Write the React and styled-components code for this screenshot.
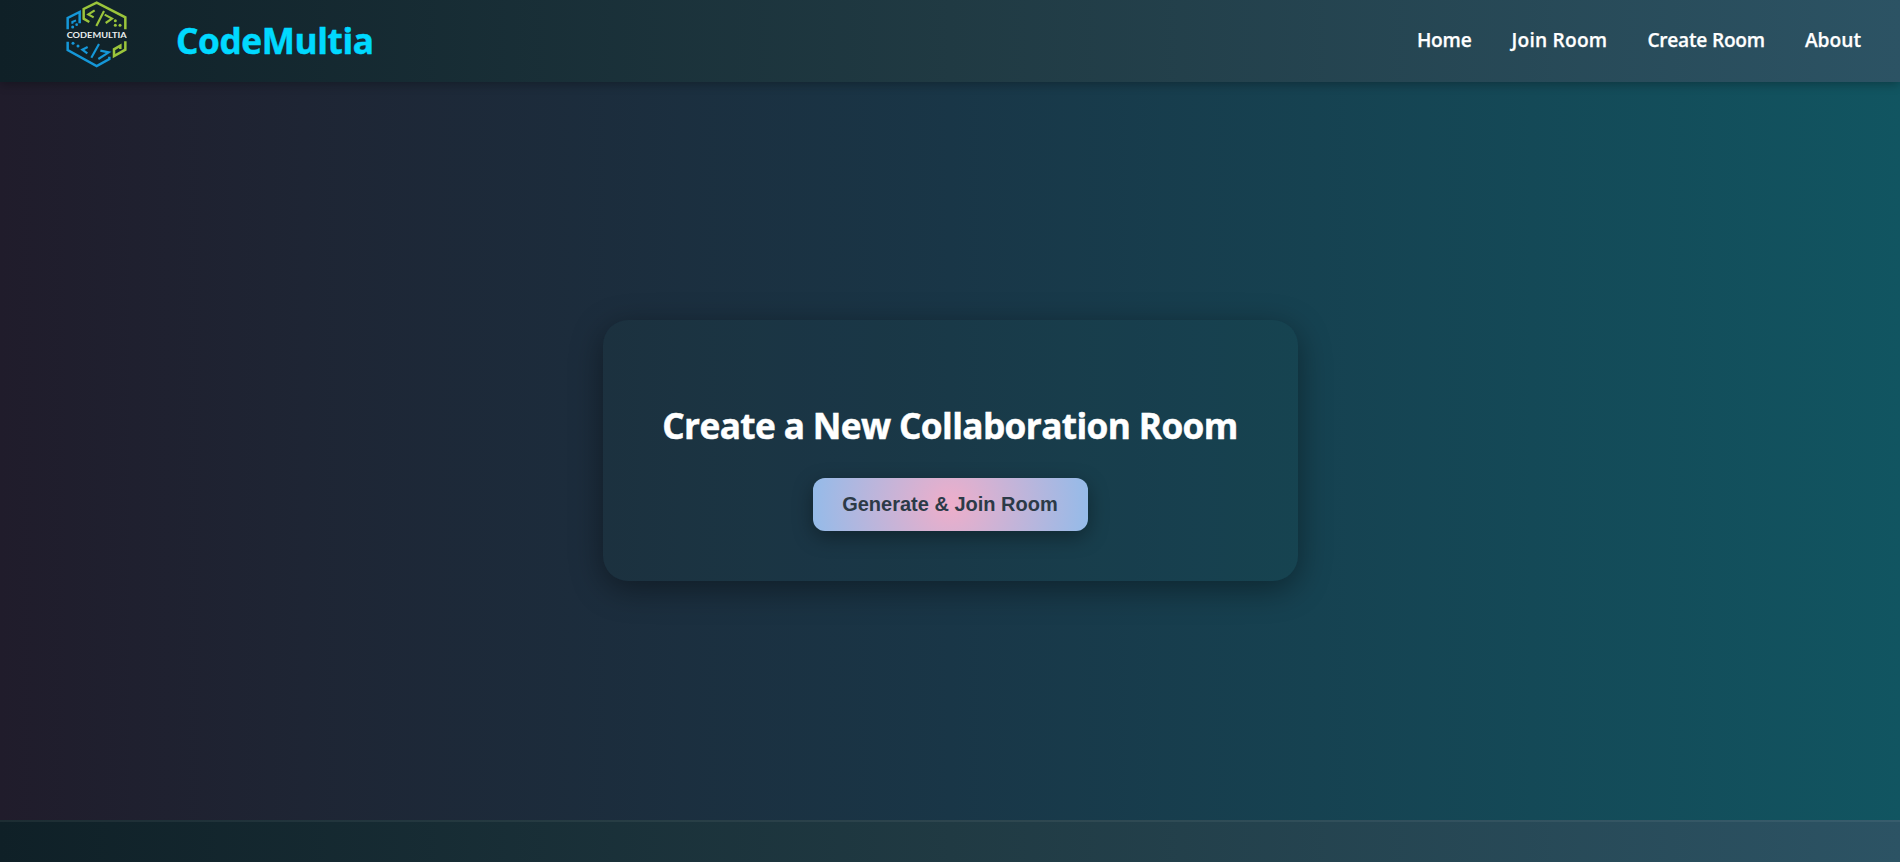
import React from 'react';
import styled, { createGlobalStyle } from 'styled-components';

const GlobalStyle = createGlobalStyle`
  * { box-sizing: border-box; }
  body {
    margin: 0;
    overflow: hidden;
    font-family: "Open Sans", "Noto Sans", sans-serif;
  }
`;

const Page = styled.div`
  display: flex;
  flex-direction: column;
  height: 100vh;
  background: linear-gradient(90deg, #201c2b 0%, #1e2534 16%, #193647 50%, #115561 100%);
`;

const Navbar = styled.nav`
  display: flex;
  align-items: center;
  justify-content: space-between;
  flex: none;
  height: 82px;
  padding: 0 39px 3px 65px;
  background: linear-gradient(90deg, #0f2027, #203a43 50%, #2c5364);
  box-shadow: 0 2px 10px rgba(0, 0, 0, 0.3);
`;

const Brand = styled.div`
  display: flex;
  align-self: stretch;
  align-items: center;
  gap: 49px;
`;

const LogoMark = styled.svg`
  display: block;
  align-self: flex-start;
  width: 62px;
  height: 69px;
  fill: none;
  stroke-width: 7.5;
`;

const LogoText = styled.text`
  font: 700 23px Lato, sans-serif;
  fill: #e9eeee;
  stroke: none;
`;

const BrandName = styled.span`
  font-size: 35.2px;
  line-height: 48px;
  font-weight: 750;
  color: #00d9ff;
  letter-spacing: -0.4px;
  -webkit-text-stroke: 0.5px #00d9ff;
`;

const Links = styled.div`
  display: flex;
  gap: 40px;
`;

const NavLink = styled.a`
  font-size: 19.2px;
  line-height: 26px;
  font-weight: 650;
  color: #fff;
  letter-spacing: ${(p) => p.$tracking}px;
  white-space: nowrap;
  -webkit-text-stroke: 0.25px #fff;
`;

const Main = styled.main`
  display: flex;
  flex: 1;
  align-items: center;
  justify-content: center;
  padding-bottom: 1px;
`;

const Card = styled.section`
  display: flex;
  flex-direction: column;
  align-items: center;
  width: 695px;
  height: 261px;
  padding: 81px 0 50px;
  border-radius: 25px;
  background: rgba(30, 90, 90, 0.1);
  box-shadow: 0 8px 32px rgba(0, 0, 0, 0.4);
`;

const Title = styled.h1`
  margin: 0 0 29px;
  font-size: 35.2px;
  line-height: 48px;
  font-weight: 750;
  color: #fff;
  letter-spacing: -0.61px;
  white-space: nowrap;
  -webkit-text-stroke: 0.5px #fff;
`;

const Button = styled.button`
  flex: none;
  width: 275px;
  height: 53px;
  padding: 0 0 1px;
  border: 0;
  border-radius: 12px;
  font: 700 20px "Liberation Sans", Arial, sans-serif;
  color: #2c3a47;
  background: radial-gradient(circle, #eeaeca 0%, #94bbe9 100%);
  box-shadow: 0 6px 20px rgba(0, 0, 0, 0.35);
`;

const Footer = styled.footer`
  flex: none;
  height: 42px;
  border-top: 2px solid rgba(255, 255, 255, 0.06);
  background: linear-gradient(90deg, #0f2027, #203a43 50%, #2c5364) border-box;
`;

const blue = '#1597d8';
const green = '#9bc53b';

function Logo() {
  return (
    <LogoMark viewBox="45 0 186 207" aria-label="CodeMultia logo">
      <g stroke={blue}>
        <path d="M53 88V54L89 36V70" />
        <path d="M67 71V66L78 61" strokeWidth="6" />
        <path d="M53 125V150L140 198L178 177V170" />
        <path d="M113 141L97 149L112 160M124 173L147 132M151 152L176 157L145 177" strokeWidth="6.5" />
      </g>
      <g stroke={green}>
        <path d="M118 66L101 56V27L140 8L226 52V88" />
        <path d="M134 31L115 43L131 52M139 78L162 33M164 44L186 56L167 69" strokeWidth="6.5" />
        <path d="M226 124V149L192 168V148L211 137V147" />
      </g>
      <g fill={green} stroke="none">
        <circle cx="196" cy="62" r="4.5" />
        <circle cx="196" cy="76" r="4.5" />
        <circle cx="210" cy="76" r="4.5" />
      </g>
      <g fill={blue} stroke="none">
        <circle cx="68" cy="81" r="4.5" />
        <circle cx="80" cy="74" r="4" />
        <circle cx="69" cy="130" r="4.5" />
        <circle cx="84" cy="138" r="4.5" />
      </g>
      <LogoText x="50" y="115" textLength="180" lengthAdjust="spacingAndGlyphs">CODEMULTIA</LogoText>
    </LogoMark>
  );
}

const links = [
  { label: 'Home', tracking: -0.2 },
  { label: 'Join Room', tracking: 0.2 },
  { label: 'Create Room', tracking: -0.25 },
  { label: 'About', tracking: 0 },
];

export default function App() {
  return (
    <>
      <GlobalStyle />
      <Page>
        <Navbar>
          <Brand>
            <Logo />
            <BrandName>CodeMultia</BrandName>
          </Brand>
          <Links>
            {links.map(({ label, tracking }) => (
              <NavLink key={label} $tracking={tracking}>{label}</NavLink>
            ))}
          </Links>
        </Navbar>
        <Main>
          <Card>
            <Title>Create a New Collaboration Room</Title>
            <Button>Generate &amp; Join Room</Button>
          </Card>
        </Main>
        <Footer />
      </Page>
    </>
  );
}
